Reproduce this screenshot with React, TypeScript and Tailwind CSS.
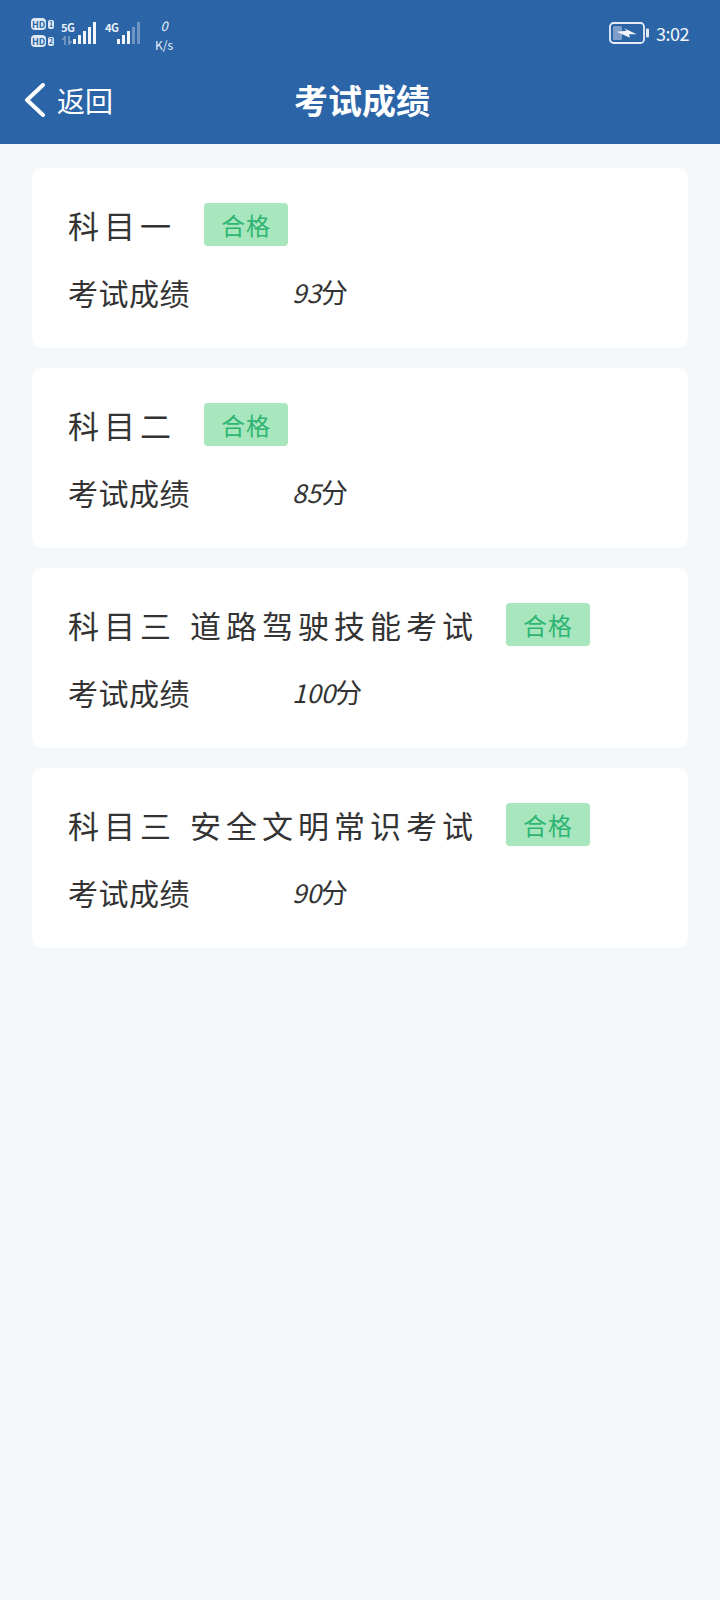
const FONT = "font-['Noto_Sans_CJK_SC','Noto_Sans',sans-serif]"

const exams = [
  { name: "科目一", score: "93" },
  { name: "科目二", score: "85" },
  { name: "科目三 道路驾驶技能考试", score: "100" },
  { name: "科目三 安全文明常识考试", score: "90" },
]

function HdTag({ n }: { n: string }) {
  return (
    <div className="flex h-[12px] items-center gap-[2px]">
      <span className="flex h-[12px] w-[15px] items-center justify-center rounded-[4px] bg-[#dfe9f5] text-[9px] leading-none font-bold text-[#2b65a8]">
        HD
      </span>
      <span className="flex h-[9px] w-[6px] items-center justify-center rounded-[2px] bg-[#dfe9f5] text-[7px] leading-none font-bold text-[#2b65a8]">
        {n}
      </span>
    </div>
  )
}

function Signal({ faded }: { faded?: boolean }) {
  return (
    <svg width="24" height="22" viewBox="0 0 24 22" className="block">
      <rect x="0" y="17" width="3" height="5" fill="#f2f6fb" />
      <rect x="5" y="13" width="3" height="9" fill="#f2f6fb" />
      <rect x="10" y="9" width="3" height="13" fill="#f2f6fb" />
      <rect x="15" y="5" width="3" height="17" fill={faded ? "#6f95c4" : "#f2f6fb"} />
      <rect x="20" y="0" width="3" height="22" fill={faded ? "#6f95c4" : "#f2f6fb"} />
    </svg>
  )
}

function DataArrows() {
  return (
    <svg width="10" height="9" viewBox="0 0 10 9" className="block">
      <path d="M3 9 V1 L0.5 4 M7 0 V8 L9.5 5" fill="none" stroke="#7f9fca" strokeWidth="1.6" />
    </svg>
  )
}

function Battery() {
  return (
    <svg width="40" height="22" viewBox="0 0 40 22" className="block">
      <rect x="1" y="1" width="34" height="20" rx="3.5" fill="none" stroke="#e3ecf6" strokeWidth="1.8" />
      <rect x="4" y="4" width="9" height="14" rx="1.5" fill="#7f9fca" />
      <path d="M7.7 9.7 L17.7 8.7 L15 6.3 L27.7 12.3 L20 12.3 L21 15.7 Z" fill="#f4f8fc" />
      <rect x="37" y="6.5" width="3" height="9" rx="1" fill="#e3ecf6" />
    </svg>
  )
}

function StatusBar() {
  return (
    <div className="flex h-[64px] items-start pt-[18px] pr-[32px] pl-[31px] text-white">
      <div className="flex w-[30px] flex-col gap-[5px]">
        <HdTag n="1" />
        <HdTag n="2" />
      </div>
      <div className="relative flex w-[43px] items-start">
        <span className="mt-[4px] w-[12px] text-[11px] leading-[11px] font-bold tracking-[-0.5px] text-[#e8eff8]">5G</span>
        <div className="mt-[4px]">
          <Signal />
        </div>
        <div className="absolute top-[18px] left-[1px]">
          <DataArrows />
        </div>
      </div>
      <div className="ml-[1px] flex w-[36px] items-start">
        <span className="mt-[4px] w-[12px] text-[11px] leading-[11px] font-bold tracking-[-0.5px] text-[#e8eff8]">4G</span>
        <div className="mt-[4px]">
          <Signal faded />
        </div>
      </div>
      <div className="ml-[13px] flex w-[20px] flex-col items-center text-[#e8eff8]">
        <span className="text-[13px] leading-[16px] italic">0</span>
        <span className="mt-[4px] text-[12px] leading-[14px] whitespace-nowrap">K/s</span>
      </div>
      <div className="ml-auto flex items-center gap-[7px] pt-[4px]">
        <Battery />
        <span className="w-[32px] text-[18px] leading-[22px] tracking-[-0.5px] whitespace-nowrap text-[#f2f6fb]">3:02</span>
      </div>
    </div>
  )
}

function ExamCard({ name, score }: { name: string; score: string }) {
  return (
    <div className="flex h-[180px] flex-col rounded-[10px] bg-white pt-[35px] pl-[36px] text-[#333333]">
      <div className="flex h-[43px] items-center">
        <span className="text-[31px] leading-[43px] tracking-[5px] [word-spacing:2px]">{name}</span>
        <span className="ml-[28px] flex h-[43px] w-[84px] items-center justify-center rounded-[4px] bg-[#a8e6bd] text-[24px] tracking-[1px] text-[#2fb573]">
          合格
        </span>
      </div>
      <div className="mt-[26px] flex h-[40px] items-center text-[30px] leading-[40px]">
        <span className="w-[224px] tracking-[0.5px]">考试成绩</span>
        <span className="text-[26px] italic">{score}</span>
        <span className="text-[27px]">分</span>
      </div>
    </div>
  )
}

export default function App() {
  return (
    <div className={`${FONT} min-h-[1600px] bg-[#f4f8fa]`}>
      <div className="h-[144px] bg-[#2b65a8]">
        <StatusBar />
        <div className="flex h-[72px] items-center pr-[20px] pl-[24px] text-white">
          <div className="flex flex-1 items-center gap-[12px]">
            <svg width="21" height="34" viewBox="0 0 21 34" className="block">
              <polyline
                points="19,2 3,17 19,32"
                fill="none"
                stroke="#ffffff"
                strokeWidth="4"
                strokeLinecap="round"
                strokeLinejoin="round"
              />
            </svg>
            <span className="text-[28px] leading-none">返回</span>
          </div>
          <span className="text-[34px] leading-none font-bold">考试成绩</span>
          <div className="flex-1" />
        </div>
      </div>
      <div className="flex flex-col gap-[20px] px-[32px] pt-[24px]">
        {exams.map((exam) => (
          <ExamCard key={exam.name} name={exam.name} score={exam.score} />
        ))}
      </div>
    </div>
  )
}
